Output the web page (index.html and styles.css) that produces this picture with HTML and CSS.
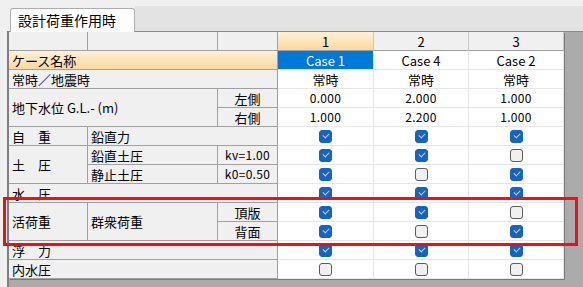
FILE: index.html
```html
<!DOCTYPE html>
<html lang="ja">
<head>
    <meta charset="UTF-8">
    <title>設計荷重作用時</title>
    <link rel="stylesheet" href="styles.css">
</head>
<body>
    <div class="page">
        <div class="tabbar">
            <div class="tabgap"></div>
            <div class="tab">設計荷重作用時</div>
            <div class="tabrest"></div>
        </div>

        <div class="gridwrap">
            <div class="grid">
                <!-- header -->
                <div class="cell h"></div>
                <div class="cell h"></div>
                <div class="cell h"></div>
                <div class="cell col sel c">1</div>
                <div class="cell col c">2</div>
                <div class="cell col c">3</div>

                <div class="cell h sel span3">ケース名称</div>
                <div class="cell d c active">Case 1</div>
                <div class="cell d c">Case 4</div>
                <div class="cell d c">Case 2</div>

                <div class="cell h span3">常時／地震時</div>
                <div class="cell d c">常時</div>
                <div class="cell d c">常時</div>
                <div class="cell d c">常時</div>

                <div class="cell h span2 rows2">地下水位 G.L.- (m)</div>
                <div class="cell h c">左側</div>
                <div class="cell d c num">0.000</div>
                <div class="cell d c num">2.000</div>
                <div class="cell d c num">1.000</div>
                <div class="cell h c">右側</div>
                <div class="cell d c num">1.000</div>
                <div class="cell d c num">2.200</div>
                <div class="cell d c num">1.000</div>

                <div class="cell h">自　重</div>
                <div class="cell h span2">鉛直力</div>
                <div class="cell d c"><span class="chk on"></span></div>
                <div class="cell d c"><span class="chk on"></span></div>
                <div class="cell d c"><span class="chk on"></span></div>

                <div class="cell h rows2">土　圧</div>
                <div class="cell h">鉛直土圧</div>
                <div class="cell h c num">kv=1.00</div>
                <div class="cell d c"><span class="chk on"></span></div>
                <div class="cell d c"><span class="chk on"></span></div>
                <div class="cell d c"><span class="chk"></span></div>
                <div class="cell h">静止土圧</div>
                <div class="cell h c num">k0=0.50</div>
                <div class="cell d c"><span class="chk on"></span></div>
                <div class="cell d c"><span class="chk"></span></div>
                <div class="cell d c"><span class="chk on"></span></div>

                <div class="cell h span3">水　圧</div>
                <div class="cell d c"><span class="chk on"></span></div>
                <div class="cell d c"><span class="chk on"></span></div>
                <div class="cell d c"><span class="chk on"></span></div>

                <div class="cell h rows2">活荷重</div>
                <div class="cell h rows2">群衆荷重</div>
                <div class="cell h c">頂版</div>
                <div class="cell d c"><span class="chk on"></span></div>
                <div class="cell d c"><span class="chk on"></span></div>
                <div class="cell d c"><span class="chk"></span></div>
                <div class="cell h c">背面</div>
                <div class="cell d c"><span class="chk on"></span></div>
                <div class="cell d c"><span class="chk"></span></div>
                <div class="cell d c"><span class="chk on"></span></div>

                <div class="cell h span3">浮　力</div>
                <div class="cell d c"><span class="chk on"></span></div>
                <div class="cell d c"><span class="chk on"></span></div>
                <div class="cell d c"><span class="chk on"></span></div>

                <div class="cell h span3">内水圧</div>
                <div class="cell d c"><span class="chk"></span></div>
                <div class="cell d c"><span class="chk"></span></div>
                <div class="cell d c"><span class="chk"></span></div>
            </div>
        </div>

        <div class="highlight"></div>
    </div>
</body>
</html>
```

FILE: styles.css
```css
body {
    margin: 0;
    background: #f0f0f0;
    font-family: "Noto Sans CJK JP", "Noto Sans", sans-serif;
    font-size: 13px;
    color: #000;
}
.page {
    position: relative;
    width: 583px;
    height: 287px;
    overflow: hidden;
}
.tabbar {
    display: flex;
    height: 31px;
    padding-top: 6px;
    box-sizing: border-box;
}
.tabgap {
    width: 10px;
}
.tab {
    background: #fff;
    border: 1px solid #adadad;
    border-bottom: none;
    border-radius: 3px 3px 0 0;
    margin-top: 2px;
    margin-bottom: -1px;
    padding: 0 7px;
    width: 125px;
    box-sizing: border-box;
    line-height: 22px;
    font-size: 14px;
    position: relative;
    z-index: 1;
}
.tabrest {
    flex: 1;
    background: #e3e3e3;
}
.gridwrap {
    margin-left: 7px;
    height: 256px;
    box-sizing: border-box;
    border-left: 2px solid #7f7f7f;
    border-top: 1px solid #8a8a8a;
    background: #ababab;
}
.grid {
    display: grid;
    grid-template-columns: 79px 130px 60px 96px 95px 95px;
    grid-auto-rows: 19px;
    width: 555px;
    box-shadow: 1px 1px 0 #7a7a7a;
}
.cell {
    box-sizing: border-box;
    display: flex;
    align-items: center;
    line-height: 1;
    white-space: nowrap;
    border-right: 1px solid #a0a0a0;
    border-bottom: 1px solid #a0a0a0;
}
.cell.h {
    background: #f0f0f0;
    padding-left: 3px;
}
.cell.d {
    background: #fff;
    border-right-color: #e6e6e6;
    border-bottom-color: #e6e6e6;
}
.cell.col {
    background: #f0f0f0;
    border-right-color: #c8c8c8;
}
.cell.c {
    justify-content: center;
    padding-left: 0;
}
.cell.num {
    font-size: 12px;
    letter-spacing: 0.3px;
}
.cell.sel {
    background: linear-gradient(#fff1d6, #fbd9a0);
}
.cell.active {
    background: #0078d7;
    color: #fff;
}
.span2 { grid-column: span 2; }
.span3 { grid-column: span 3; }
.rows2 { grid-row: span 2; }

.chk {
    width: 13px;
    height: 13px;
    box-sizing: border-box;
    border: 1px solid #5c5c5c;
    border-radius: 3px;
    background: #f0f0f0;
    position: relative;
}
.chk.on {
    background: #1663c0;
    border-color: #1663c0;
}
.chk.on::after {
    content: "";
    position: absolute;
    left: 3px;
    top: 2px;
    width: 5px;
    height: 3px;
    border-left: 1.5px solid #b8d2f2;
    border-bottom: 1.5px solid #b8d2f2;
    transform: rotate(-45deg);
}
.highlight {
    position: absolute;
    left: 3px;
    top: 197px;
    width: 575px;
    height: 49px;
    box-sizing: border-box;
    border: 3px solid #ee1111;
}
```
